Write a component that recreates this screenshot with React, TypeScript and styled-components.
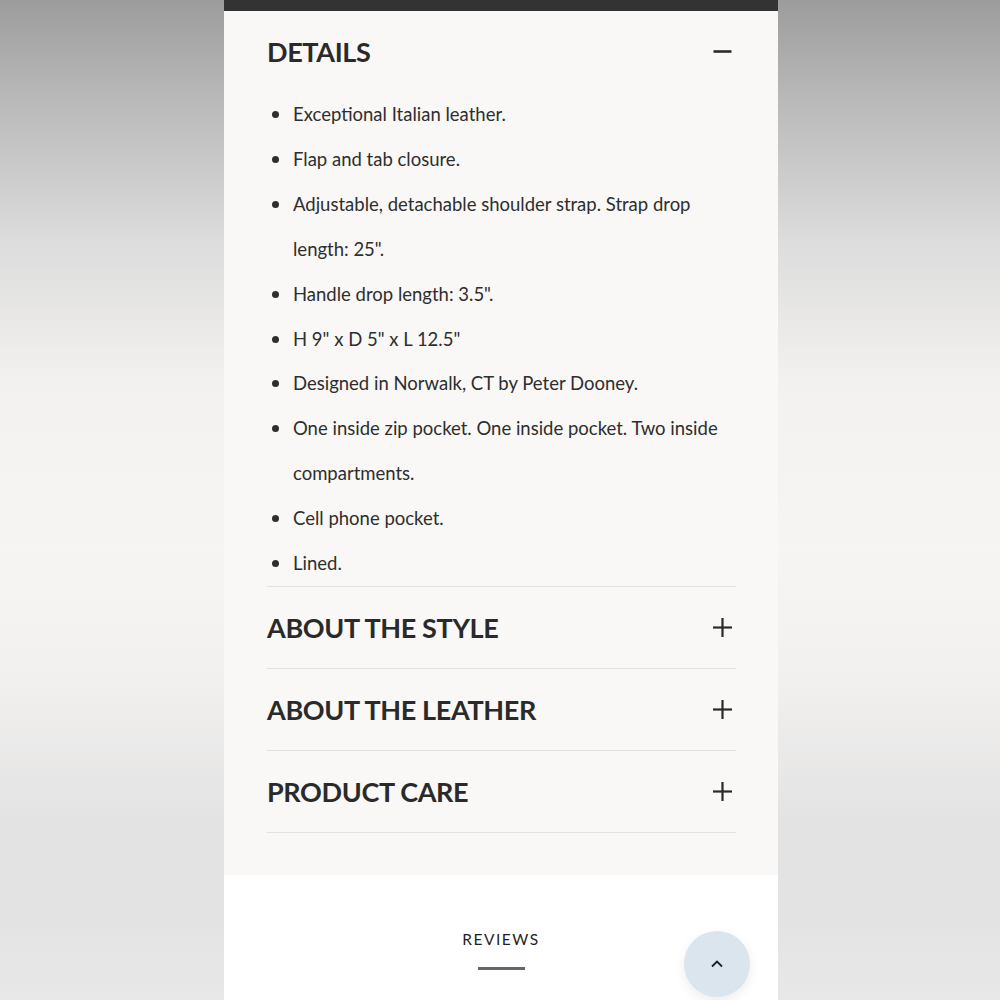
import React from 'react';
import styled, { createGlobalStyle } from 'styled-components';

const GlobalStyle = createGlobalStyle`
    html, body {
        margin: 0;
        padding: 0;
        height: 100%;
    }
    body {
        font-family: Lato, "Liberation Sans", sans-serif;
        overflow: hidden;
    }
`;

const Page = styled.div`
    width: 1000px;
    height: 1000px;
    box-sizing: border-box;
    padding-left: 2px;
    display: flex;
    justify-content: center;
    background: linear-gradient(
        180deg,
        #9c9c9c 0%,
        #b9b9b9 10%,
        #dcdcdc 24%,
        #f2f1ef 38%,
        #f6f5f3 55%,
        #f1f0ef 68%,
        #e4e3e3 82%,
        #e3e3e3 92%,
        #e8e8e8 100%
    );
`;

const Column = styled.div`
    width: 554px;
    height: 1000px;
    display: flex;
    flex-direction: column;
    position: relative;
    overflow: hidden;
`;

const TopBar = styled.div`
    height: 11px;
    background-color: #333333;
    flex-shrink: 0;
`;

const Accordion = styled.div`
    background-color: #f9f8f6;
    padding: 0 42px 42px 43px;
`;

const Section = styled.div`
    border-bottom: 1px solid #e4e3e1;
`;

const Header = styled.div`
    height: 81px;
    display: flex;
    align-items: center;
    justify-content: space-between;
    padding-right: 4px;
`;

const Title = styled.h2`
    margin: 0;
    font-size: 27px;
    font-weight: 700;
    color: #2a2a2a;
    letter-spacing: -0.35px;
`;

const List = styled.ul`
    margin: 0;
    padding: 0;
    list-style: none;
`;

const Item = styled.li`
    position: relative;
    padding-left: 26px;
    font-size: 18.5px;
    line-height: 44.9px;
    color: #2e2e2e;
    &::before {
        content: '';
        position: absolute;
        left: 5px;
        top: 19px;
        width: 7px;
        height: 7px;
        border-radius: 50%;
        background-color: #2e2e2e;
    }
`;

const Reviews = styled.div`
    flex: 1;
    background-color: #ffffff;
    display: flex;
    flex-direction: column;
    align-items: center;
    padding-top: 54px;
`;

const ReviewsTitle = styled.h3`
    margin: 0;
    font-size: 15.5px;
    font-weight: 400;
    letter-spacing: 1.5px;
    color: #1f1f1f;
    line-height: 20px;
`;

const Underline = styled.div`
    width: 47px;
    height: 3px;
    background-color: #666666;
    margin-top: 18px;
`;

const ScrollTop = styled.button`
    position: absolute;
    left: 460px;
    top: 931px;
    width: 66px;
    height: 66px;
    border-radius: 50%;
    border: none;
    background-color: #dbe5ed;
    box-shadow: 0 4px 12px rgba(0, 0, 0, 0.08);
    display: flex;
    align-items: center;
    justify-content: center;
    padding: 0;
    cursor: pointer;
`;

function Minus() {
    return (
        <svg width="19" height="19" viewBox="0 0 19 19">
            <line x1="0.5" y1="9.5" x2="18.5" y2="9.5" stroke="#2a2a2a" strokeWidth="2.6" />
        </svg>
    );
}

function Plus() {
    return (
        <svg width="19" height="19" viewBox="0 0 19 19">
            <line x1="0" y1="9.5" x2="19" y2="9.5" stroke="#2a2a2a" strokeWidth="2.2" />
            <line x1="9.5" y1="0" x2="9.5" y2="19" stroke="#2a2a2a" strokeWidth="2.2" />
        </svg>
    );
}

const details = [
    'Exceptional Italian leather.',
    'Flap and tab closure.',
    'Adjustable, detachable shoulder strap. Strap drop length: 25".',
    'Handle drop length: 3.5".',
    'H 9" x D 5" x L 12.5"',
    'Designed in Norwalk, CT by Peter Dooney.',
    'One inside zip pocket. One inside pocket. Two inside compartments.',
    'Cell phone pocket.',
    'Lined.',
];

const closed = ['ABOUT THE STYLE', 'ABOUT THE LEATHER', 'PRODUCT CARE'];

export default function App() {
    return (
        <Page>
            <GlobalStyle />
            <Column>
                <TopBar />
                <Accordion>
                    <Section>
                        <Header>
                            <Title>DETAILS</Title>
                            <Minus />
                        </Header>
                        <List>
                            {details.map((d) => (
                                <Item key={d}>{d}</Item>
                            ))}
                        </List>
                    </Section>
                    {closed.map((c) => (
                        <Section key={c}>
                            <Header>
                                <Title>{c}</Title>
                                <Plus />
                            </Header>
                        </Section>
                    ))}
                </Accordion>
                <Reviews>
                    <ReviewsTitle>REVIEWS</ReviewsTitle>
                    <Underline />
                </Reviews>
                <ScrollTop aria-label="Back to top">
                    <svg width="14" height="14" viewBox="0 0 14 14">
                        <polyline points="2,9.5 7,4.5 12,9.5" fill="none" stroke="#1e1e1e" strokeWidth="1.8" />
                    </svg>
                </ScrollTop>
            </Column>
        </Page>
    );
}
